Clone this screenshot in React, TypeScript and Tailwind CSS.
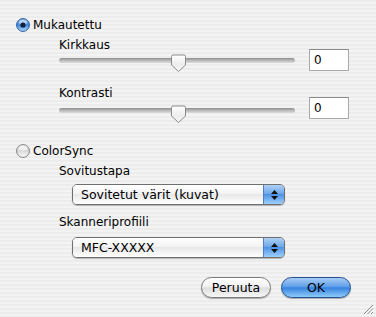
import React from 'react';

const font = 'font-["DejaVu_Sans",Verdana,sans-serif]';

const Radio = ({ checked }: { checked: boolean }) => (
  <svg width="14" height="14" viewBox="0 0 14 14" className="shrink-0">
    <defs>
      <linearGradient id="rOn" x1="0" y1="0" x2="0" y2="1">
        <stop offset="0" stopColor="#8fbef0" />
        <stop offset="0.5" stopColor="#3f88de" />
        <stop offset="1" stopColor="#b5deff" />
      </linearGradient>
      <linearGradient id="rOff" x1="0" y1="0" x2="0" y2="1">
        <stop offset="0" stopColor="#f4f4f4" />
        <stop offset="0.5" stopColor="#d8d8d8" />
        <stop offset="1" stopColor="#ffffff" />
      </linearGradient>
    </defs>
    <circle cx="7" cy="7" r="6.4" fill={checked ? 'url(#rOn)' : 'url(#rOff)'} stroke={checked ? '#2a5898' : '#7f7f7f'} strokeWidth="1" />
    <ellipse cx="7" cy="4.2" rx="4" ry="2.2" fill="#ffffff" opacity="0.5" />
    {checked && <circle cx="7" cy="7" r="2.6" fill="#14203a" />}
  </svg>
);

const Slider = ({ trackTop, thumbTop }: { trackTop: string; thumbTop: string }) => (
  <div className="relative w-[236px] h-[24px] shrink-0">
    <div className={`absolute left-0 right-0 ${trackTop} h-[5px] rounded-full bg-[linear-gradient(180deg,#8e8e8e,#b9b9b9_50%,#dcdcdc)]`} />
    <svg className={`absolute left-[111px] ${thumbTop}`} width="17" height="19" viewBox="0 0 17 19">
      <defs>
        <linearGradient id="th" x1="0" y1="0" x2="0" y2="1">
          <stop offset="0" stopColor="#ffffff" />
          <stop offset="0.6" stopColor="#ececec" />
          <stop offset="1" stopColor="#f8f8f8" />
        </linearGradient>
      </defs>
      <path d="M1.5 2.5 Q1.5 1 3 1 H14 Q15.5 1 15.5 2.5 V11 L8.5 17.5 L1.5 11 Z" fill="url(#th)" stroke="#8a8a8a" strokeWidth="1" />
    </svg>
  </div>
);

const NumBox = () => (
  <div className="w-[40px] h-[22px] bg-white border border-[#a9a9a9] border-t-[#8a8a8a] pl-[4px] text-[12px] leading-[20px]">0</div>
);

const Popup = ({ label }: { label: string }) => (
  <div className="ml-[72px] w-[213px] h-[21px] flex rounded-[5px] border border-[#6f6f6f] overflow-hidden shadow-[0_1px_1px_rgba(0,0,0,0.25)]">
    <div className="flex-1 pl-[8px] text-[12.5px] leading-[19px] bg-[linear-gradient(180deg,#ffffff,#f3f3f3_45%,#e8e8e8_50%,#ffffff)]">{label}</div>
    <div className="w-[21px] border-l border-[#4f7fbf] flex flex-col items-center justify-center gap-[2px] bg-[linear-gradient(180deg,#aed0f5,#6fa8ea_45%,#4d93e6_50%,#9fd0fb)]">
      <svg width="7" height="4" viewBox="0 0 7 4"><path d="M3.5 0 L7 4 H0 Z" fill="#111" /></svg>
      <svg width="7" height="4" viewBox="0 0 7 4"><path d="M0 0 H7 L3.5 4 Z" fill="#111" /></svg>
    </div>
  </div>
);

export default function App() {
  return (
    <div className={`relative w-[376px] h-[317px] overflow-hidden text-black ${font} bg-[repeating-linear-gradient(180deg,#ececec_0px,#ececec_2px,#f3f3f3_2px,#f3f3f3_4px)]`}>
      <div className="flex flex-col pt-[18px]">
        <div className="flex items-center h-[14px] ml-[16px] gap-[3px] text-[12px] leading-[14px]">
          <Radio checked />
          <span>Mukautettu</span>
        </div>

        <div className="ml-[59px] mt-[6px] text-[12px] leading-[14px]">Kirkkaus</div>
        <div className="flex items-start ml-[59px] mt-[-3px] gap-[14px]">
          <Slider trackTop="top-[9px]" thumbTop="top-[5px]" />
          <NumBox />
        </div>

        <div className="ml-[59px] mt-[13px] text-[12px] leading-[14px]">Kontrasti</div>
        <div className="flex items-start ml-[59px] mt-[-3px] gap-[14px]">
          <Slider trackTop="top-[11px]" thumbTop="top-[8px]" />
          <NumBox />
        </div>

        <div className="flex items-center h-[14px] ml-[16px] mt-[23px] gap-[3px] text-[12px] leading-[14px]">
          <Radio checked={false} />
          <span>ColorSync</span>
        </div>

        <div className="ml-[59px] mt-[6px] text-[12px] leading-[14px]">Sovitustapa</div>
        <div className="mt-[6px]">
          <Popup label="Sovitetut värit (kuvat)" />
        </div>

        <div className="ml-[59px] mt-[10px] text-[12px] leading-[14px]">Skanneriprofiili</div>
        <div className="mt-[8px]">
          <Popup label="MFC-XXXXX" />
        </div>

        <div className="flex justify-end gap-[10px] pr-[25px] mt-[19px]">
          <button className="w-[70px] h-[21px] rounded-full border border-[#7a7a7a] text-[12.5px] leading-[19px] bg-[linear-gradient(180deg,#ffffff,#f1f1f1_45%,#dedede_52%,#f7f7f7)] shadow-[0_1px_1px_rgba(0,0,0,0.3)]">
            Peruuta
          </button>
          <button className="w-[70px] h-[21px] rounded-full border border-[#23508f] text-[12.5px] leading-[19px] bg-[linear-gradient(180deg,#a8cdf5,#5f9ee9_45%,#3683df_52%,#8fcbfb)] shadow-[0_1px_1px_rgba(0,0,0,0.3)]">
            OK
          </button>
        </div>
      </div>

      <svg className="absolute right-[2px] bottom-[2px]" width="11" height="11" viewBox="0 0 11 11">
        <path d="M10 1 L1 10 M10 4.5 L4.5 10 M10 8 L8 10" stroke="#8c8c8c" strokeWidth="1" />
        <path d="M11 2 L2 11 M11 5.5 L5.5 11" stroke="#ffffff" strokeWidth="1" />
      </svg>
    </div>
  );
}
